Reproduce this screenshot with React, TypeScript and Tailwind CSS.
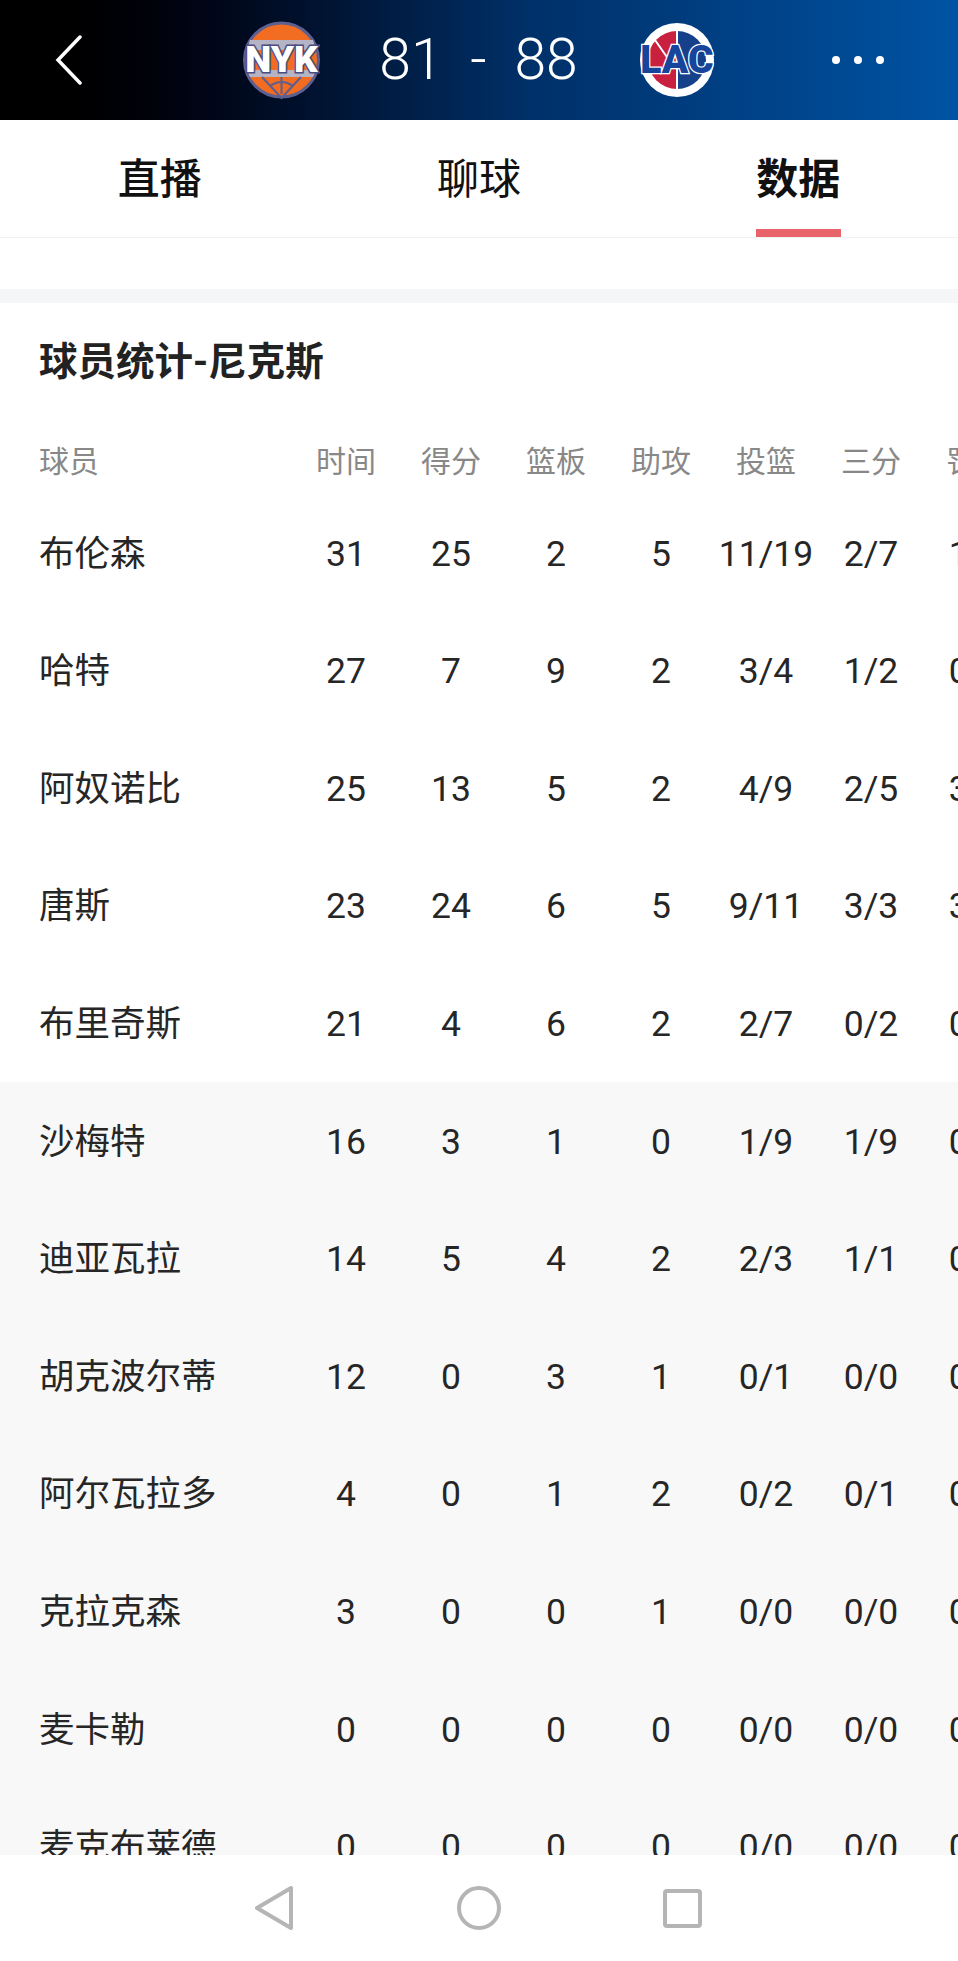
import React from "react";

const starters = [
  ["布伦森", "31", "25", "2", "5", "11/19", "2/7", "1/2"],
  ["哈特", "27", "7", "9", "2", "3/4", "1/2", "0/0"],
  ["阿奴诺比", "25", "13", "5", "2", "4/9", "2/5", "3/4"],
  ["唐斯", "23", "24", "6", "5", "9/11", "3/3", "3/3"],
  ["布里奇斯", "21", "4", "6", "2", "2/7", "0/2", "0/0"],
];

const bench = [
  ["沙梅特", "16", "3", "1", "0", "1/9", "1/9", "0/0"],
  ["迪亚瓦拉", "14", "5", "4", "2", "2/3", "1/1", "0/0"],
  ["胡克波尔蒂", "12", "0", "3", "1", "0/1", "0/0", "0/0"],
  ["阿尔瓦拉多", "4", "0", "1", "2", "0/2", "0/1", "0/0"],
  ["克拉克森", "3", "0", "0", "1", "0/0", "0/0", "0/0"],
  ["麦卡勒", "0", "0", "0", "0", "0/0", "0/0", "0/0"],
  ["麦克布莱德", "0", "0", "0", "0", "0/0", "0/0", "0/0"],
];

const columns = ["时间", "得分", "篮板", "助攻", "投篮", "三分", "罚球"];

function NykLogo() {
  return (
    <svg width="77" height="80" viewBox="0 0 77 80">
      <circle cx="38.5" cy="40" r="37" fill="#f26c21" stroke="#5c5f8f" strokeWidth="3" />
      <path d="M7 20 H70 L73 30 H4 Z" fill="#b4b4c6" />
      <path d="M4 50 H73 L70 57 H7 Z" fill="#b4b4c6" />
      <path d="M19 57 L38.5 78 L58 57" fill="none" stroke="#5c5f8f" strokeWidth="2" />
      <path d="M38.5 57 V74 M27 66 Q38.5 58 50 66" fill="none" stroke="#5c5f8f" strokeWidth="2" />
      <text
        x="38.5"
        y="52"
        textAnchor="middle"
        fontFamily="Roboto, sans-serif"
        fontWeight="900"
        fontSize="37"
        fill="#fff"
        stroke="#4a4d7d"
        strokeWidth="3"
        paintOrder="stroke"
      >
        NYK
      </text>
    </svg>
  );
}

function LacLogo() {
  return (
    <svg width="78" height="80" viewBox="0 0 78 80">
      <circle cx="39" cy="40" r="37" fill="#fff" />
      <path d="M39 11 A29 29 0 0 0 39 69 Z" fill="#c8203f" />
      <path d="M39 11 A29 29 0 0 1 39 69 Z" fill="#17408b" />
      <path d="M39 10 V70 M17 20 L31 40" stroke="#fff" strokeWidth="2" fill="none" />
      <text
        x="39"
        y="53"
        textAnchor="middle"
        fontFamily="Roboto, sans-serif"
        fontWeight="900"
        fontSize="39"
        fill="#17459b"
        stroke="#fff"
        strokeWidth="2.5"
        paintOrder="stroke"
      >
        LAC
      </text>
    </svg>
  );
}

function Row({ cells }: { cells: string[] }) {
  return (
    <div className="grid grid-cols-[293.5px_repeat(7,105px)] h-[117.6px] pt-[3px] items-center text-[35.5px] text-[#262626]">
      <div className="pl-[39px] whitespace-nowrap">{cells[0]}</div>
      {cells.slice(1).map((value, i) => (
        <div key={i} className="text-center whitespace-nowrap">
          {value}
        </div>
      ))}
    </div>
  );
}

export default function App() {
  return (
    <div className="w-[958px] h-[1961px] bg-white flex flex-col overflow-hidden font-['Roboto','Noto_Sans_CJK_SC',sans-serif]">
      <header className="h-[120px] shrink-0 flex items-center bg-gradient-to-r from-black via-[#003068] via-55% to-[#0053a4]">
        <div className="w-[150px] pl-[54px]">
          <svg width="30" height="50" viewBox="0 0 30 50" fill="none" stroke="#fff" strokeWidth="3.5" strokeLinecap="round">
            <path d="M26 2 L4 25 L26 48" />
          </svg>
        </div>
        <div className="flex-1 flex items-center justify-center">
          <NykLogo />
          <div className="w-[318px] text-center text-[57px] font-light text-white whitespace-pre">81  -  88</div>
          <LacLogo />
        </div>
        <div className="w-[150px] flex justify-end gap-[14px] pr-[74px]">
          <span className="w-2 h-2 rounded-full bg-white" />
          <span className="w-2 h-2 rounded-full bg-white" />
          <span className="w-2 h-2 rounded-full bg-white" />
        </div>
      </header>

      <nav className="h-[118px] shrink-0 grid grid-cols-3 items-center text-center text-[42px] text-[#111] border-b border-[#f2f2f2]">
        <div className="font-medium pt-0.5">直播</div>
        <div className="pt-0.5">聊球</div>
        <div className="relative h-full flex items-center justify-center font-bold pt-0.5">
          数据
          <span className="absolute bottom-0 left-[117px] w-[85px] h-2 bg-[#e8636a]" />
        </div>
      </nav>

      <main className="flex-1 min-h-0 overflow-hidden pt-[51px]">
        <div className="h-[14px] bg-[#f5f6f8]" />
        <h2 className="h-[116px] pt-0.5 flex items-center pl-[39px] text-[38.5px] font-bold text-[#222]">球员统计-尼克斯</h2>
        <div className="grid grid-cols-[293.5px_repeat(7,105px)] h-[75px] pt-[10px] items-center text-[30px] text-[#888]">
          <div className="pl-[39px]">球员</div>
          {columns.map((name) => (
            <div key={name} className="text-center whitespace-nowrap">
              {name}
            </div>
          ))}
        </div>
        <div>
          {starters.map((cells) => (
            <Row key={cells[0]} cells={cells} />
          ))}
        </div>
        <div className="bg-[#f8f8f8]">
          {bench.map((cells) => (
            <Row key={cells[0]} cells={cells} />
          ))}
        </div>
      </main>

      <footer className="h-[106px] shrink-0 bg-white flex items-center justify-center gap-[162px] pr-px">
        <svg width="40" height="46" viewBox="0 0 40 46" fill="none" stroke="#b5b5b5" strokeWidth="4" strokeLinejoin="round">
          <path d="M36 3 V43 L2 23 Z" />
        </svg>
        <svg width="44" height="44" viewBox="0 0 44 44" fill="none" stroke="#b5b5b5" strokeWidth="4">
          <circle cx="22" cy="22" r="20" />
        </svg>
        <svg width="39" height="39" viewBox="0 0 39 39" fill="none" stroke="#b5b5b5" strokeWidth="4" strokeLinejoin="round">
          <rect x="2" y="2" width="35" height="35" rx="2" />
        </svg>
      </footer>
    </div>
  );
}
